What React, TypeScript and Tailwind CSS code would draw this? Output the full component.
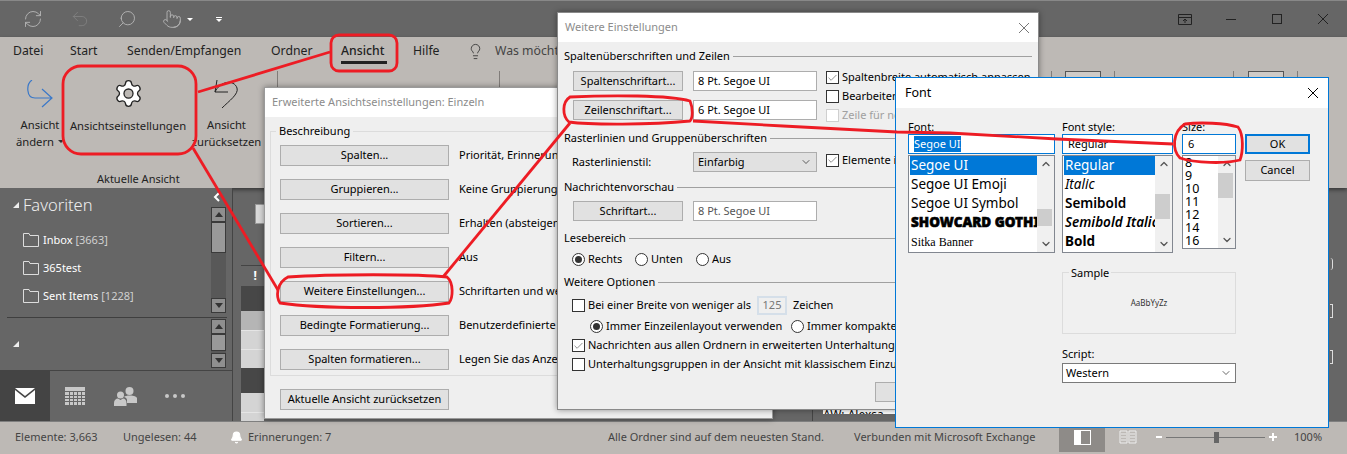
import React from "react";
import { Search, Pointer, RefreshCw, Undo2, Lightbulb, ChevronDown, ChevronUp, Check, Bell } from "lucide-react";

const F = { fontFamily: '"Noto Sans", "Liberation Sans", sans-serif' };

function CloseX({ size, color }: { size: number; color: string }) {
  return (
    <svg width={size} height={size} viewBox={`0 0 ${size} ${size}`} fill="none" stroke={color} className="shrink-0">
      <path d={`M0 0L${size} ${size}M${size} 0L0 ${size}`} />
    </svg>
  );
}

function Btn({ label, className = "" }: { label: string; className?: string }) {
  return (
    <div className={"flex items-center justify-center whitespace-nowrap border border-[#adadad] bg-[#e1e1e1] text-[11px] text-black " + className}>
      {label}
    </div>
  );
}

function Legend({ label, className = "" }: { label: string; className?: string }) {
  return (
    <div className={"flex h-[16px] items-center gap-[3px] text-[11px] text-black " + className}>
      <span className="whitespace-nowrap">{label}</span>
      <span className="h-px flex-1 bg-[#a0a0a0]" />
    </div>
  );
}

function Box({ on = false, disabled = false }: { on?: boolean; disabled?: boolean }) {
  return (
    <span className={"flex h-[13px] w-[13px] shrink-0 items-center justify-center border bg-white " + (disabled ? "border-[#cfcfcf]" : "border-[#333]")}>
      {on && <Check size={12} strokeWidth={1.2} className="text-[#333]" />}
    </span>
  );
}

function Radio({ on = false }: { on?: boolean }) {
  return (
    <span className="flex h-[13px] w-[13px] shrink-0 items-center justify-center rounded-full border border-[#333] bg-white">
      {on && <span className="h-[7px] w-[7px] rounded-full bg-[#333]" />}
    </span>
  );
}

function Value({ text, className = "" }: { text: string; className?: string }) {
  return <div className={"flex h-[20px] w-[124px] items-center border border-[#adadad] bg-white pl-[4px] text-[11px] " + className}>{text}</div>;
}

function Scrollbar({ thumbTop, thumbH }: { thumbTop: number; thumbH: number }) {
  return (
    <div className="relative flex h-full w-[17px] shrink-0 flex-col items-center justify-between bg-[#f0f0f0] text-[#555]">
      <ChevronUp size={12} strokeWidth={2.5} className="mt-[2px]" />
      <div className="absolute left-0 w-[15px] bg-[#cdcdcd]" style={{ top: thumbTop, height: thumbH }} />
      <ChevronDown size={12} strokeWidth={2.5} className="mb-[2px]" />
    </div>
  );
}

function NavArrow({ up }: { up?: boolean }) {
  return (
    <div className="flex h-[15px] items-center justify-center border border-[#3a3a3a] bg-[#8f8f8f]">
      <span className={"h-0 w-0 border-x-[4px] border-x-transparent " + (up ? "border-b-[5px] border-b-[#333]" : "border-t-[5px] border-t-[#333]")} />
    </div>
  );
}

function NavScroll({ h, thumb }: { h: number; thumb: number }) {
  return (
    <div className="flex w-[15px] flex-col bg-[#585858]" style={{ height: h }}>
      <NavArrow up />
      <div className="border border-[#3a3a3a] bg-[#999999]" style={{ height: thumb }} />
      <div className="flex-1" />
      <NavArrow />
    </div>
  );
}

function Tri() {
  return <span className="block h-0 w-0 border-b-[6px] border-l-[6px] border-b-[#eee] border-l-transparent" />;
}

function FolderRow({ name, count }: { name: string; count?: string }) {
  return (
    <div className="flex h-[28px] items-center gap-[4px] pl-[23px] text-[11px] text-white">
      <svg width="16" height="14" viewBox="0 0 16 14" fill="none" stroke="#ddd">
        <path d="M.5 13.500V.5H6l1 2h8.500v11z" />
      </svg>
      <span>{name}{count && <span className="text-[#d0d0d0]"> {count}</span>}</span>
    </div>
  );
}

function Sep({ className = "" }: { className?: string }) {
  return <span className={"mt-[8px] h-[100px] w-px shrink-0 bg-[#807c79] " + className} />;
}

function GearIcon() {
  return (
    <svg width="31" height="31" viewBox="0 0 24 24" fill="#fff" stroke="#222" strokeWidth="1">
      <path d="M9.671 4.136a2.34 2.34 0 0 1 4.659 0 2.34 2.34 0 0 0 3.319 1.915 2.34 2.34 0 0 1 2.33 4.033 2.34 2.34 0 0 0 0 3.831 2.34 2.34 0 0 1-2.33 4.033 2.34 2.34 0 0 0-3.319 1.915 2.34 2.34 0 0 1-4.659 0 2.34 2.34 0 0 0-3.32-1.915 2.34 2.34 0 0 1-2.33-4.033 2.34 2.34 0 0 0 0-3.831A2.34 2.34 0 0 1 6.35 6.051a2.34 2.34 0 0 0 3.32-1.915" />
      <circle cx="12" cy="12" r="3.500" fill="#bdb9b5" />
    </svg>
  );
}

function Ribbon() {
  return (
    <div className="relative h-[151px] overflow-hidden bg-[#bdb9b5] shadow-[0_2px_4px_rgba(0,0,0,0.45)]">
      <div className="flex h-[26px] items-center whitespace-nowrap pl-[13px] pt-[2px] text-[12.250px] text-[#222]">
        <span className="w-[57px]">Datei</span>
        <span className="w-[57px]">Start</span>
        <span className="w-[144px]">Senden/Empfangen</span>
        <span className="w-[70px]">Ordner</span>
        <span className="relative w-[72px] font-medium">
          Ansicht
          <span className="absolute -bottom-[4px] left-0 h-[3px] w-[46px] bg-[#222]" />
        </span>
        <span className="w-[58px]">Hilfe</span>
        <span className="flex w-[24px] justify-start"><Lightbulb size={17} strokeWidth={1.2} className="-ml-[4px] text-[#333]" /></span>
        <span className="text-[#444]">Was möchten Sie tun?</span>
      </div>
      <div className="flex text-[11.250px] leading-[17px] text-[#222]">
        <div className="flex w-[80px] shrink-0 flex-col items-center whitespace-nowrap">
          <svg width="28" height="28" viewBox="0 0 28 28" fill="none" stroke="#3a78c8" strokeWidth="1.2" className="mt-[17px]">
            <path d="M6 0C0 4 0 18 9 18H26M16 9L26 18L16 27" />
          </svg>
          <span className="mt-[8px]">Ansicht</span>
          <span className="flex items-center gap-[4px]">ändern<span className="h-0 w-0 border-x-[3px] border-t-[3px] border-x-transparent border-t-[#333]" /></span>
        </div>
        <div className="flex w-[96px] shrink-0 flex-col items-center whitespace-nowrap">
          <span className="mt-[15px]"><GearIcon /></span>
          <span className="mt-[8px]">Ansichtseinstellungen</span>
        </div>
        <div className="flex w-[101px] shrink-0 flex-col items-center whitespace-nowrap">
          <svg width="26" height="30" viewBox="0 0 26 30" fill="none" stroke="#222" strokeWidth="1" className="mt-[16px]">
            <path d="M3 1L1 13H14M1 13C6 2 20 0 23 9C25 15 15 22 8 29" />
          </svg>
          <span className="mt-[7px]">Ansicht</span>
          <span>zurücksetzen</span>
        </div>
        <Sep />
        <span className="w-[221px] shrink-0" />
        <Sep />
        <span className="w-[551px] shrink-0" />
        <Sep />
        <span className="ml-[13px] mt-[8px] h-[30px] w-[36px] shrink-0 border border-[#555] bg-[#cfcbc7]" />
        <Sep className="ml-[13px]" />
        <Sep className="ml-[118px]" />
        <span className="ml-[14px] mt-[8px] h-[30px] w-[36px] shrink-0 border border-[#555] bg-[#cfcbc7]" />
        <Sep className="ml-[13px]" />
      </div>
      <div className="absolute left-[97px] top-[134px] text-[11px] text-[#222]">Aktuelle Ansicht</div>
    </div>
  );
}

function Nav() {
  return (
    <div className="relative h-[233px] w-[233px] shrink-0 border-r border-[#444] bg-[#666666]">
      <svg width="8" height="10" viewBox="0 0 8 10" fill="none" stroke="#fff" strokeWidth="2" className="absolute left-[213px] top-[4px]"><path d="M6 1L2 5L6 9" /></svg>
      <div className="flex h-[129px]">
        <div className="w-[211px] shrink-0">
          <div className="mt-[7px] flex h-[20px] items-center gap-[4px] pl-[13px] text-[16.500px] font-light text-[#eee]">
            <Tri />
            Favoriten
          </div>
          <div className="mt-[11px]">
            <FolderRow name="Inbox" count="[3663]" />
            <FolderRow name="365test" />
            <FolderRow name="Sent Items" count="[1228]" />
          </div>
        </div>
        <div className="mt-[19px]"><NavScroll h={106} thumb={31} /></div>
      </div>
      <div className="ml-[7px] mr-[5px] h-px bg-[#3f3f3f]" />
      <div className="flex h-[52px]">
        <div className="w-[211px] shrink-0 pl-[13px] pt-[23px]"><Tri /></div>
        <div className="mt-[1px]"><NavScroll h={49} thumb={17} /></div>
      </div>
      <div className="flex h-[51px] items-center border-t border-[#444]">
        <div className="flex h-full w-[50px] items-center justify-center bg-[#444444]">
          <svg width="20" height="16" viewBox="0 0 20 16"><path d="M0 0h20L10 8z" fill="#fff" /><path d="M0 2l10 8 10-8v14H0z" fill="#fff" /></svg>
        </div>
        <div className="flex w-[50px] justify-center">
          <svg width="20" height="18" viewBox="0 0 20 18" fill="#c8c8c8"><path d="M0 0h20v4H0z" /><path d="M0 5h20v13H0z" /><path d="M4.500 5v13M8.500 5v13M12.500 5v13M16.500 5v13M0 8.500h20M0 11.500h20M0 14.500h20" stroke="#666" /></svg>
        </div>
        <div className="flex w-[50px] justify-center">
          <svg width="23" height="19" viewBox="0 0 23 19" fill="#c8c8c8">
            <circle cx="15.500" cy="4" r="4" />
            <path d="M10 10c1-1 3-1.500 5.500-1.500S22 9 23 11v5H13v-3c0-1-1-2.500-3-3z" />
            <circle cx="6.500" cy="8" r="3.500" />
            <path d="M0 16c0-3 2-4.500 4-4.500l2.500 1.500L9 11.500c2 0 3.500 1.500 3.500 4.500v3H0z" />
          </svg>
        </div>
        <div className="flex w-[50px] justify-center gap-[4px]">
          <span className="h-[4px] w-[4px] rounded-full bg-[#c8c8c8]" />
          <span className="h-[4px] w-[4px] rounded-full bg-[#c8c8c8]" />
          <span className="h-[4px] w-[4px] rounded-full bg-[#c8c8c8]" />
        </div>
      </div>
    </div>
  );
}

function StatusBar() {
  return (
    <div className="flex h-[33px] items-center whitespace-nowrap border-t border-[#7f7f7f] bg-[#bdb9b5] pb-[2px] pl-[15px] text-[11px] text-[#444]">
      <span className="w-[108px]">Elemente: 3,663</span>
      <span className="w-[107px]">Ungelesen: 44</span>
      <span className="w-[18px]"><Bell size={13} className="fill-white text-white" /></span>
      <span className="w-[360px]">Erinnerungen: 7</span>
      <span className="w-[246px]">Alle Ordner sind auf dem neuesten Stand.</span>
      <span className="w-[205px]">Verbunden mit Microsoft Exchange</span>
      <div className="flex h-[30px] w-[46px] items-center justify-center bg-[#8e8b88]">
        <span className="flex h-[15px] w-[17px] border border-white"><span className="w-[6px] bg-white" /></span>
      </div>
      <svg width="18" height="14" viewBox="0 0 18 14" fill="none" stroke="#eee" className="ml-[14px]"><path d="M1 1h7v12H1zM10 1h7v12h-7zM2 4h5M2 7h5M2 10h5M11 4h5M11 7h5M11 10h5" /></svg>
      <span className="ml-[19px] h-[2px] w-[6px] bg-white" />
      <span className="relative ml-[4px] h-px w-[99px] bg-[#777]">
        <span className="absolute left-[48px] -top-[5px] h-[11px] w-[5px] bg-[#666]" />
      </span>
      <svg width="8" height="8" viewBox="0 0 8 8" stroke="#fff" strokeWidth="2" className="ml-[4px]"><path d="M0 4H8M4 0V8" /></svg>
      <span className="ml-[17px]">100%</span>
    </div>
  );
}

function Erweiterte() {
  const rows = [
    ["Spalten...", "Priorität, Erinnerung, Kategorien"],
    ["Gruppieren...", "Keine Gruppierung"],
    ["Sortieren...", "Erhalten (absteigend)"],
    ["Filtern...", "Aus"],
    ["Weitere Einstellungen...", "Schriftarten und weitere Einstellungen"],
    ["Bedingte Formatierung...", "Benutzerdefinierte Farben und Schriftarten"],
    ["Spalten formatieren...", "Legen Sie das Anzeigeformat fest"],
  ];
  return (
    <section className="absolute left-[264px] top-[87px] h-[332px] w-[509px] border border-[#9a9a9a] bg-[#efefef] shadow-[0_0_6px_rgba(0,0,0,0.4)]">
      <div className="flex h-[29px] items-center bg-white pl-[7px] text-[11px] text-[#8c8c8c]">Erweiterte Ansichtseinstellungen: Einzeln</div>
      <div className="relative ml-[5px] mr-[5px] mt-[14px] h-[245px] border border-[#dcdcdc] pl-[9px] pt-[13px]">
        <span className="absolute -top-[9px] left-[5px] bg-[#efefef] px-[3px] text-[11px] text-black">Beschreibung</span>
        <div className="flex flex-col gap-[13px]">
          {rows.map(([a, b]) => (
            <div key={a} className="flex h-[21px] items-center whitespace-nowrap">
              <Btn label={a} className="h-[21px] w-[169px] shrink-0" />
              <span className="ml-[10px] text-[11px] text-black">{b}</span>
            </div>
          ))}
        </div>
      </div>
      <Btn label="Aktuelle Ansicht zurücksetzen" className="ml-[15px] mt-[13px] h-[21px] w-[169px]" />
    </section>
  );
}

function Weitere() {
  return (
    <section className="absolute left-[557px] top-[12px] h-[398px] w-[482px] overflow-hidden border border-[#8a8a8a] bg-[#efefef] shadow-[0_0_6px_rgba(0,0,0,0.4)]">
      <div className="flex h-[29px] items-center justify-between bg-white pl-[7px] pr-[9px] text-[11px] text-[#8c8c8c]">
        Weitere Einstellungen
        <CloseX size={10} color="#777" />
      </div>
      <div className="px-[6px] pt-[6px] text-[11px]">
        <Legend label="Spaltenüberschriften und Zeilen" />
        <div className="mt-[7px] flex">
          <div className="ml-[9px] w-[253px] shrink-0">
            <div className="flex">
              <Btn label="Spaltenschriftart..." className="h-[20px] w-[110px]" />
              <Value text="8 Pt. Segoe UI" className="ml-[10px]" />
            </div>
            <div className="mt-[9px] flex">
              <Btn label="Zeilenschriftart..." className="h-[20px] w-[110px]" />
              <Value text="6 Pt. Segoe UI" className="ml-[10px]" />
            </div>
          </div>
          <div className="-mb-[8px] -mt-[3px] h-[57px] whitespace-nowrap">
            <div className="flex h-[19px] items-center gap-[3px]"><Box on />Spaltenbreite automatisch anpassen</div>
            <div className="flex h-[19px] items-center gap-[3px]"><Box />Bearbeiten in der Zelle</div>
            <div className="flex h-[19px] items-center gap-[3px] text-[#a0a0a0]"><Box disabled />Zeile für neue Elemente</div>
          </div>
        </div>
        <Legend label="Rasterlinien und Gruppenüberschriften" className="mt-[10px]" />
        <div className="ml-[8px] mt-[6px] flex h-[20px] items-center whitespace-nowrap">
          <span className="w-[121px] shrink-0">Rasterlinienstil:</span>
          <div className="flex h-[20px] w-[124px] shrink-0 items-center justify-between border border-[#adadad] bg-[#e1e1e1] px-[4px]">Einfarbig<ChevronDown size={12} strokeWidth={1.2} /></div>
          <span className="ml-[9px] flex items-center gap-[3px] self-start"><Box on />Elemente in Gruppen</span>
        </div>
        <Legend label="Nachrichtenvorschau" className="mt-[7px]" />
        <div className="ml-[9px] mt-[6px] flex h-[20px] items-center">
          <Btn label="Schriftart..." className="h-[20px] w-[110px]" />
          <Value text="8 Pt. Segoe UI" className="ml-[10px] text-[#555]" />
        </div>
        <Legend label="Lesebereich" className="mt-[9px]" />
        <div className="ml-[8px] mt-[5px] flex h-[16px] items-center">
          <span className="flex w-[63px] items-center gap-[3px]"><Radio on />Rechts</span>
          <span className="flex w-[61px] items-center gap-[3px]"><Radio />Unten</span>
          <span className="flex items-center gap-[3px]"><Radio />Aus</span>
        </div>
        <Legend label="Weitere Optionen" className="mt-[7px]" />
        <div className="ml-[8px] mt-[6px] flex h-[19px] items-center whitespace-nowrap">
          <span className="flex w-[185px] shrink-0 items-center gap-[3px]"><Box />Bei einer Breite von weniger als</span>
          <span className="flex h-[19px] w-[30px] shrink-0 items-center justify-center border-2 border-[#d5dfe9] text-[#777]">125</span>
          <span className="ml-[6px]">Zeichen</span>
        </div>
        <div className="ml-[26px] mt-[3px] flex h-[17px] items-center whitespace-nowrap">
          <span className="flex w-[201px] shrink-0 items-center gap-[3px]"><Radio on />Immer Einzeilenlayout verwenden</span>
          <span className="flex items-center gap-[3px]"><Radio />Immer kompaktes Layout</span>
        </div>
        <div className="ml-[8px] mt-[2px] flex h-[17px] items-center gap-[3px] whitespace-nowrap"><Box on />Nachrichten aus allen Ordnern in erweiterten Unterhaltungen</div>
        <div className="ml-[8px] mt-[2px] flex h-[17px] items-center gap-[3px] whitespace-nowrap"><Box />Unterhaltungsgruppen in der Ansicht mit klassischem Einzug</div>
      </div>
      <div className="ml-[317px] mt-[9px] h-[20px] w-[80px] border border-[#adadad] bg-[#e1e1e1]" />
    </section>
  );
}

function FontList({ items, w, thumbTop, thumbH }: { items: { t: string; c: string }[]; w: string; thumbTop: number; thumbH: number }) {
  return (
    <div className={"mt-px flex h-[98px] overflow-hidden border border-[#828790] bg-white " + w}>
      <div className="min-w-0 flex-1 overflow-hidden whitespace-nowrap pl-[1px]">
        {items.map((it, i) => (
          <div key={it.t} className={"flex h-[19px] items-center pl-[1px] " + it.c + (i === 0 ? " bg-[#0078d7] text-white" : "")}>{it.t}</div>
        ))}
      </div>
      <Scrollbar thumbTop={thumbTop} thumbH={thumbH} />
    </div>
  );
}

function FontDialog() {
  return (
    <section className="absolute left-[895px] top-[77px] h-[351px] w-[434px] border border-[#0078d7] bg-[#f0f0f0]">
      <div className="flex h-[30px] items-center justify-between bg-white pl-[9px] pr-[10px] text-[12.500px] text-black">
        Font
        <CloseX size={10} color="#000" />
      </div>
      <div className="flex pl-[12px] pt-[13px] text-[11px]">
        <div className="w-[154px] shrink-0">
          <div className="-mt-[1px] mb-[1px] h-[13px] leading-[13px]">Font:</div>
          <div className="flex h-[20px] w-[147px] items-center border border-[#0078d7] bg-white pl-[5px]"><span className="bg-[#0078d7] text-white">Segoe UI</span></div>
          <FontList
            w="w-[147px]"
            thumbTop={53}
            thumbH={17}
            items={[
              { t: "Segoe UI", c: "text-[13.500px]" },
              { t: "Segoe UI Emoji", c: "text-[13.500px]" },
              { t: "Segoe UI Symbol", c: "text-[13.500px]" },
              { t: "SHOWCARD GOTHIC", c: "text-[13.500px] font-black [-webkit-text-stroke:0.6px_black]" },
              { t: "Sitka Banner", c: "text-[12px] [font-family:'Liberation_Serif']" },
            ]}
          />
        </div>
        <div className="w-[120px] shrink-0">
          <div className="-mt-[1px] mb-[1px] h-[13px] leading-[13px]">Font style:</div>
          <div className="flex h-[20px] w-[111px] items-center border border-[#0078d7] bg-white pl-[5px]">Regular</div>
          <FontList
            w="w-[111px]"
            thumbTop={38}
            thumbH={25}
            items={[
              { t: "Regular", c: "text-[13.500px]" },
              { t: "Italic", c: "text-[13.500px] italic" },
              { t: "Semibold", c: "text-[13.500px] font-semibold" },
              { t: "Semibold Italic", c: "text-[13.500px] font-semibold italic" },
              { t: "Bold", c: "text-[13.500px] font-bold" },
            ]}
          />
        </div>
        <div className="w-[63px] shrink-0">
          <div className="-mt-[1px] mb-[1px] h-[13px] leading-[13px]">Size:</div>
          <div className="flex h-[20px] w-[54px] items-center border border-[#0078d7] bg-white pl-[5px]">6</div>
          <div className="mt-px flex h-[94px] w-[54px] overflow-hidden border border-[#828790] bg-white">
            <div className="flex-1 pl-[2px] text-[12.500px] leading-[13px]">
              {["8", "9", "10", "11", "12", "14", "16"].map((n) => <div key={n}>{n}</div>)}
            </div>
            <Scrollbar thumbTop={17} thumbH={25} />
          </div>
        </div>
        <div className="pt-[13px]">
          <Btn label="OK" className="h-[20px] w-[65px] border-2 !border-[#0078d7]" />
          <Btn label="Cancel" className="mt-[6px] h-[21px] w-[65px]" />
        </div>
      </div>
      <div className="ml-[166px] mt-[19px] w-[174px]">
        <div className="relative flex h-[62px] items-center justify-center border border-[#dcdcdc] text-[8px] text-[#333]">
          <span className="absolute -top-[8px] left-[6px] bg-[#f0f0f0] px-[2px] text-[11px] text-black">Sample</span>
          AaBbYyZz
        </div>
        <div className="mt-[12px] h-[15px] text-[11px]">Script:</div>
        <div className="mt-[2px] flex h-[20px] items-center justify-between border border-[#7a7a7a] bg-white px-[3px] text-[11px]">
          Western<ChevronDown size={12} strokeWidth={1.2} />
        </div>
      </div>
    </section>
  );
}

function Annotations() {
  return (
    <svg className="pointer-events-none absolute left-0 top-0" width="1347" height="454" fill="none" stroke="#ed1c24" strokeWidth="2.800">
      <rect x="331" y="35" width="66" height="36" rx="8" />
      <rect x="63" y="66" width="133" height="88" rx="18" />
      <path d="M198 92L330 52" />
      <path d="M193 148L278 290" />
      <path d="M288 277C330 274 420 274 447 277C454 283 453 298 449 303C410 309 320 309 280 303C276 297 276 283 288 277Z" />
      <path d="M443 277L570 123" />
      <path d="M570 97C610 95 670 95 690 101C693 108 693 118 690 121C650 125 590 125 569 122C562 116 562 102 570 97Z" />
      <path d="M693 121L783 126L897 132L950 133L1057 139L1173 144" />
      <path d="M1185 124C1200 122 1225 123 1238 127C1244 135 1243 152 1240 160C1225 164 1195 163 1180 158C1172 150 1172 132 1185 124Z" />
    </svg>
  );
}

function Main() {
  return (
    <main className="relative flex flex-1">
      <div className="w-[579px] shrink-0 pl-[8px]">
        <div className="ml-[14px] mt-[16px] h-[20px] w-[20px] border border-[#999] bg-[#d9d9d9]" />
        <div className="mt-[41px] h-px w-[40px] bg-[#444]" />
        <div className="flex h-[20px] w-[23px] items-center justify-end pr-[7px] text-[12px] font-bold text-white">!</div>
        <div className="w-[23px]">
          <div className="h-[25px] bg-[#474747]" />
          <div className="h-[19px] bg-[#b5b5b5]" />
          <div className="h-[19px] border-t border-[#e5e5e5] bg-[#d4d4d4]" />
          <div className="h-[19px] border-t border-[#e5e5e5] bg-[#d4d4d4]" />
          <div className="h-[25px] bg-[#474747]" />
          <div className="h-[19px] bg-[#d4d4d4]" />
          <div className="h-[9px] border-t border-[#e5e5e5] bg-[#d4d4d4]" />
        </div>
      </div>
      <div className="flex-1 border-l border-[#444] pl-[10px] pt-[221px]">
        <div className="h-[5px] w-[73px] overflow-hidden bg-white text-[12px] leading-[12px] text-black">AW: Alexsa</div>
      </div>
      <div className="absolute left-[1097px] top-[70px] h-[12px] w-[3px] rounded-r-full border-r border-[#ddd]" />
      <div className="absolute left-[1097px] top-[116px] h-[14px] w-[3px] border-y border-r border-[#ddd]" />
      <div className="absolute left-[1097px] top-[162px] h-[14px] w-[3px] border-y border-r border-[#ddd]" />
    </main>
  );
}

export default function App() {
  return (
    <div className="relative h-[454px] w-[1347px] overflow-hidden bg-[#666666] text-black" style={F}>
      <header className="flex h-[37px] items-center border-t border-[#888] bg-[#666666] pl-[23px]">
        <RefreshCw size={20} strokeWidth={1.1} className="text-[#b5b5b5]" />
        <Undo2 size={20} strokeWidth={1.1} className="ml-[27px] text-[#808080]" />
        <Search size={20} strokeWidth={1.1} className="ml-[27px] -scale-x-100 text-[#b5b5b5]" />
        <Pointer size={20} strokeWidth={1.1} className="ml-[25px] text-[#b5b5b5]" />
        <span className="ml-[5px] h-0 w-0 border-x-[3px] border-t-[3px] border-x-transparent border-t-white" />
        <span className="ml-[23px] flex flex-col items-center gap-[1px]">
          <span className="h-px w-[6px] bg-white" />
          <span className="h-0 w-0 border-x-[3px] border-t-[3px] border-x-transparent border-t-white" />
        </span>
        <div className="ml-auto flex items-center pr-[19px]">
          <svg width="14" height="11" viewBox="0 0 14 11" fill="none" stroke="#222"><path d="M.5.5h13v10H.5zM.5 3.500h13M7 9V5M5 7l2-2 2 2" /></svg>
          <span className="ml-[34px] h-px w-[10px] bg-[#222]" />
          <span className="ml-[36px] h-[10px] w-[10px] border border-[#222]" />
          <span className="ml-[36px]"><CloseX size={10} color="#222" /></span>
        </div>
      </header>
      <Ribbon />
      <div className="flex h-[233px]">
        <Nav />
        <Main />
      </div>
      <StatusBar />
      <Erweiterte />
      <Weitere />
      <FontDialog />
      <Annotations />
    </div>
  );
}
